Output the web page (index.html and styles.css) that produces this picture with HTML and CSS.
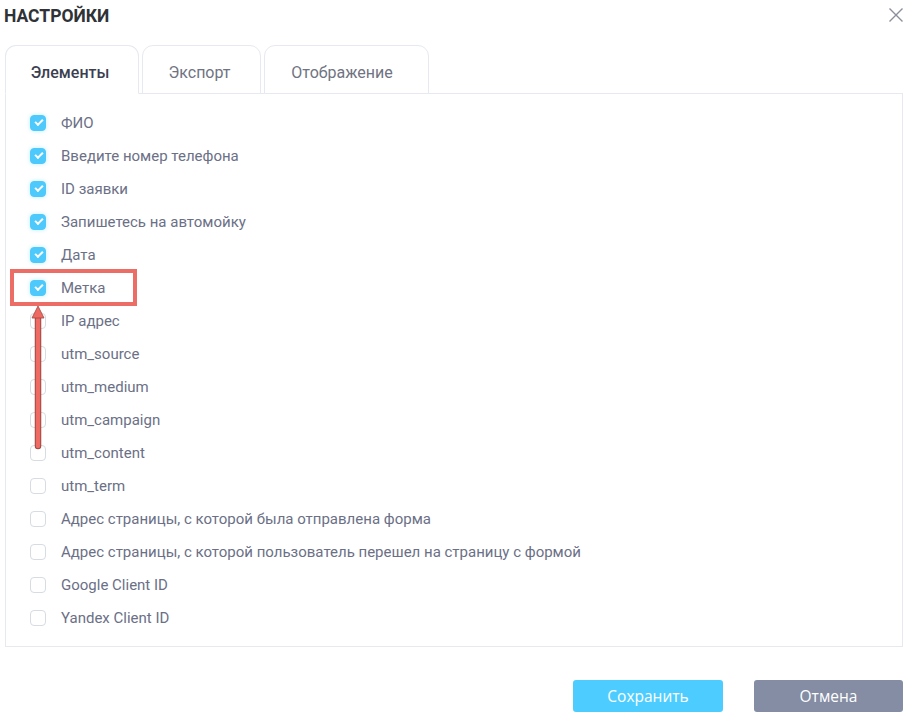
FILE: index.html
```html
<!DOCTYPE html>
<html lang="ru">
<head>
<meta charset="utf-8">
<link rel="stylesheet" href="styles.css">
</head>
<body>
<div class="dialog">
  <div class="header">
    <h1 class="title">НАСТРОЙКИ</h1>
    <button class="close" aria-label="Закрыть">
      <svg width="16" height="16" viewBox="0 0 16 16"><path d="M1.5 1.5 L14.5 14.5 M14.5 1.5 L1.5 14.5" stroke="#8a8f9c" stroke-width="1.4" fill="none"/></svg>
    </button>
  </div>
  <div class="tabs">
    <div class="tab active t1">Элементы</div>
    <div class="tab t2">Экспорт</div>
    <div class="tab t3">Отображение</div>
  </div>
  <div class="panel">
    <ul class="list">
      <li class="row"><span class="cb on"></span><span class="label">ФИО</span></li>
      <li class="row"><span class="cb on"></span><span class="label">Введите номер телефона</span></li>
      <li class="row"><span class="cb on"></span><span class="label">ID заявки</span></li>
      <li class="row"><span class="cb on"></span><span class="label">Запишетесь на автомойку</span></li>
      <li class="row"><span class="cb on"></span><span class="label">Дата</span></li>
      <li class="row"><span class="cb on"></span><span class="label">Метка</span></li>
      <li class="row"><span class="cb"></span><span class="label">IP адрес</span></li>
      <li class="row"><span class="cb"></span><span class="label">utm_source</span></li>
      <li class="row"><span class="cb"></span><span class="label">utm_medium</span></li>
      <li class="row"><span class="cb"></span><span class="label">utm_campaign</span></li>
      <li class="row"><span class="cb"></span><span class="label">utm_content</span></li>
      <li class="row"><span class="cb"></span><span class="label">utm_term</span></li>
      <li class="row"><span class="cb"></span><span class="label">Адрес страницы, с которой была отправлена форма</span></li>
      <li class="row"><span class="cb"></span><span class="label">Адрес страницы, с которой пользователь перешел на страницу с формой</span></li>
      <li class="row"><span class="cb"></span><span class="label">Google Client ID</span></li>
      <li class="row"><span class="cb"></span><span class="label">Yandex Client ID</span></li>
    </ul>
  </div>
  <div class="footer">
    <button class="btn save">Сохранить</button>
    <button class="btn cancel">Отмена</button>
  </div>
  <div class="highlight"></div>
  <svg class="arrow" width="20" height="150" viewBox="0 0 20 150">
    <path d="M10 143 L10 14" stroke="#9a4a44" stroke-width="6.5" stroke-linecap="round"/>
    <path d="M10 143 L10 14" stroke="#ef6a62" stroke-width="4.5" stroke-linecap="round"/>
    <path d="M10 3 L4 15 L16 15 Z" fill="#ef6a62" stroke="#9a4a44" stroke-width="0.8" stroke-linejoin="round"/>
  </svg>
</div>
</body>
</html>
```
FILE: styles.css
```css
* { box-sizing: border-box; }
html, body { margin: 0; padding: 0; background: #fff; }
body { font-family: Roboto, "Noto Sans", Arial, sans-serif; }

.dialog {
  position: relative;
  width: 907px;
  height: 715px;
}

.header {
  display: flex;
  justify-content: space-between;
  align-items: center;
  height: 32px;
  padding: 0 0 0 4px;
}
.title {
  margin: 0;
  font-size: 17.5px;
  font-weight: 700;
  color: #2f3236;
  letter-spacing: 0;
}
.close {
  border: 0;
  background: none;
  padding: 0;
  width: 16px;
  height: 16px;
  margin-right: 3px;
  margin-top: -3px;
  cursor: pointer;
}

.tabs {
  display: flex;
  gap: 3px;
  margin: 13px 0 0 5px;
  height: 48px;
  position: relative;
  z-index: 1;
}
.tab {
  height: 49px;
  border: 1px solid #e6e9ef;
  border-radius: 11px 11px 0 0;
  display: flex;
  align-items: center;
  justify-content: center;
  font-size: 16px;
  color: #6f7382;
  background: #fff;
  padding-top: 6px;
}
.tab.active {
  border-bottom-color: #fff;
  color: #3b3f51;
  font-weight: 500;
}
.t1 { width: 134px; padding-right: 4px; }
.t2 { width: 119px; padding-right: 4px; }
.t3 { width: 165px; padding-right: 9px; }

.panel {
  margin-left: 5px;
  width: 898px;
  height: 554px;
  border: 1px solid #e6e9ee;
}
.list {
  list-style: none;
  margin: 0;
  padding: 12px 0 0 24px;
}
.row {
  display: flex;
  align-items: center;
  height: 33px;
  gap: 15px;
}
.cb {
  width: 16px;
  height: 16px;
  border: 1px solid #d6dce1;
  border-radius: 4px;
  background: #fff;
  flex: none;
  position: relative;
}
.cb.on {
  background: #4ec9fb;
  border-color: #4ec9fb;
  box-shadow: 0 0 4px rgba(78, 201, 251, 0.35);
}
.cb.on::after {
  content: "";
  position: absolute;
  left: 4px;
  top: 3px;
  width: 6px;
  height: 3px;
  border-left: 2px solid #fff;
  border-bottom: 2px solid #fff;
  transform: rotate(-45deg);
}
.label {
  font-size: 15px;
  color: #6b7086;
}

.footer {
  display: flex;
  justify-content: flex-end;
  gap: 31px;
  margin-top: 33px;
  padding-right: 4px;
}
.btn {
  height: 32px;
  border: 0;
  border-radius: 3px;
  color: #fff;
  font-family: "Open Sans", "Noto Sans", sans-serif;
  font-size: 15.5px;
  padding: 0;
}
.save { width: 150px; background: #4dcdff; }
.cancel { width: 149px; background: #848da4; }

.highlight {
  position: absolute;
  left: 10px;
  top: 269px;
  width: 127px;
  height: 37px;
  border: 4px solid #ec6d65;
  pointer-events: none;
}
.arrow {
  position: absolute;
  left: 28px;
  top: 303px;
}
```
